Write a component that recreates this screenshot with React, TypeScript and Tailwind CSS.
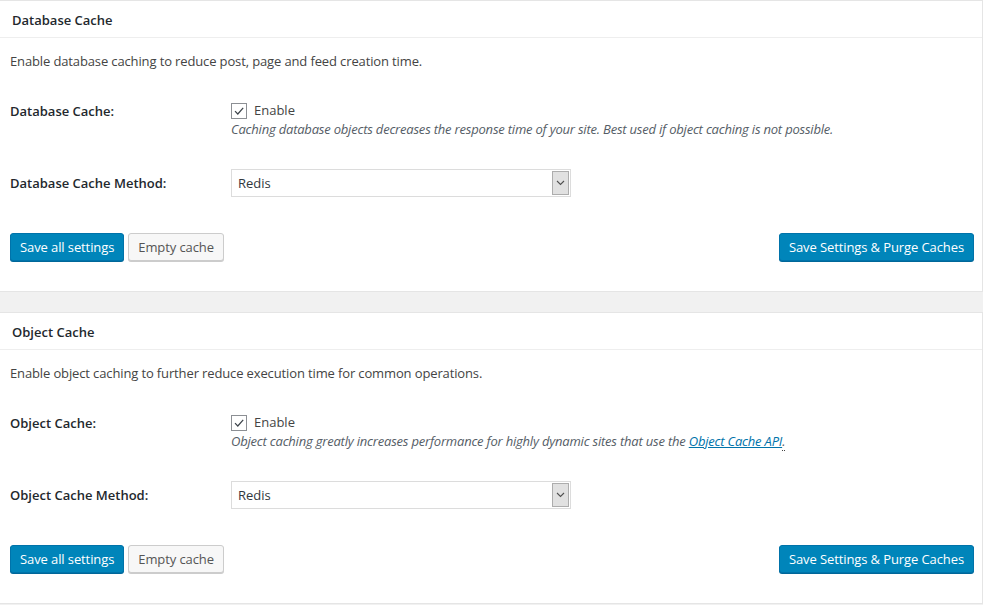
import { useState } from "react";

const font = { fontFamily: '"Segoe UI", "Open Sans", "Noto Sans", sans-serif' };

function Checkbox({ checked, onChange }: { checked: boolean; onChange: () => void }) {
  return (
    <button
      type="button"
      onClick={onChange}
      className="w-[16px] h-[16px] border border-[#8c8f94] bg-white flex items-center justify-center shrink-0"
    >
      {checked && (
        <svg width="12" height="12" viewBox="0 0 12 12" fill="none">
          <path d="M2 6.2 L4.8 9 L10.2 2.8" stroke="#3c434a" strokeWidth="1.2" />
        </svg>
      )}
    </button>
  );
}

function SelectBox({ value }: { value: string }) {
  return (
    <div className="w-[340px] h-[28px] border border-[#dcdcdc] bg-white flex items-stretch">
      <div className="flex-1 flex items-center pl-[6px] pt-[2px] text-[13px] text-[#32373c]">{value}</div>
      <div className="w-[17px] my-[1px] mr-[1px] bg-[#e1e1e1] border border-[#adadad] flex items-center justify-center">
        <svg width="9" height="6" viewBox="0 0 9 6" fill="none">
          <path d="M1 1 L4.5 4.5 L8 1" stroke="#505050" strokeWidth="1.1" />
        </svg>
      </div>
    </div>
  );
}

function Buttons() {
  return (
    <div className="flex items-center mt-[36px] tracking-[-0.1px]">
      <button className="h-[28px] px-[9px] pt-[1px] rounded-[3px] bg-[#0085ba] border border-[#0073aa] shadow-[0_1px_0_#006799] text-white text-[13px]">
        Save all settings
      </button>
      <button className="ml-[4px] h-[28px] px-[9px] pt-[1px] rounded-[3px] bg-[#f7f7f7] border border-[#cccccc] shadow-[0_1px_0_#cccccc] text-[#555555] text-[13px]">
        Empty cache
      </button>
      <button className="ml-auto h-[28px] px-[9px] pt-[1px] rounded-[3px] bg-[#0085ba] border border-[#0073aa] shadow-[0_1px_0_#006799] text-white text-[13px]">
        Save Settings &amp; Purge Caches
      </button>
    </div>
  );
}

function Panel({
  title,
  intro,
  label,
  help,
  methodLabel,
}: {
  title: string;
  intro: string;
  label: string;
  help: React.ReactNode;
  methodLabel: string;
}) {
  const [on, setOn] = useState(true);
  return (
    <div className="bg-white border-t border-b border-r border-[#e5e5e5]">
      <div className="h-[37px] border-b border-[#eeeeee] flex items-center px-[12px] pt-[3px] text-[13px] font-semibold text-[#23282d]">
        {title}
      </div>
      <div className="pl-[10px] pr-[8px] pt-[14px] pb-[30px]">
        <p className="text-[13px] leading-[18px] text-[#444444] tracking-[-0.13px]">{intro}</p>
        <div className="flex mt-[32px]">
          <div className="w-[221px] text-[13px] font-semibold text-[#23282d] leading-[18px]">{label}</div>
          <div>
            <div className="flex items-center h-[18px]">
              <Checkbox checked={on} onChange={() => setOn(!on)} />
              <span className="ml-[7px] text-[13px] text-[#444444]">Enable</span>
            </div>
            <p className="text-[13px] leading-[18px] italic text-[#555d66] tracking-[-0.2px]">{help}</p>
          </div>
        </div>
        <div className="flex items-center mt-[31px]">
          <div className="w-[221px] pt-[2px] text-[13px] font-semibold text-[#23282d]">{methodLabel}</div>
          <SelectBox value="Redis" />
        </div>
        <Buttons />
      </div>
    </div>
  );
}

export default function App() {
  return (
    <div className="w-[983px] min-h-[605px] bg-[#f1f1f1]" style={font}>
      <Panel
        title="Database Cache"
        intro="Enable database caching to reduce post, page and feed creation time."
        label="Database Cache:"
        help="Caching database objects decreases the response time of your site. Best used if object caching is not possible."
        methodLabel="Database Cache Method:"
      />
      <div className="h-[20px]" />
      <Panel
        title="Object Cache"
        intro="Enable object caching to further reduce execution time for common operations."
        label="Object Cache:"
        help={
          <>
            Object caching greatly increases performance for highly dynamic sites that use the{" "}
            <a href="#" className="text-[#0073aa] underline">
              Object Cache API
            </a>
            <span className="border-b border-dotted border-[#444]">.</span>
          </>
        }
        methodLabel="Object Cache Method:"
      />
    </div>
  );
}
